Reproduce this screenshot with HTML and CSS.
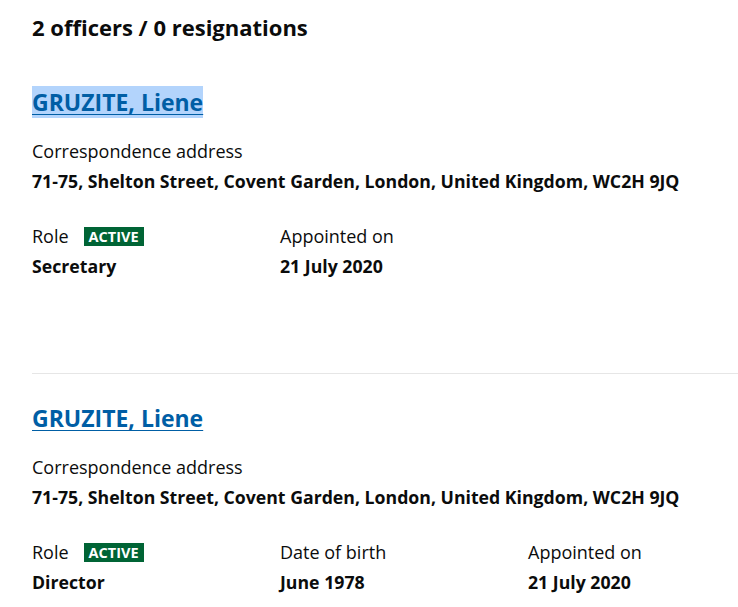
FILE: index.html
```html
<!DOCTYPE html>
<html lang="en">
<head>
<meta charset="utf-8">
<title>Officers</title>
<link rel="stylesheet" href="styles.css">
</head>
<body>
<main class="page">
  <h2 class="count">2 officers / 0 resignations</h2>
  <div class="officers">
    <section class="officer">
      <h3 class="name"><a href="#" class="selected">GRUZITE, Liene</a></h3>
      <dl class="field">
        <dt>Correspondence address</dt>
        <dd>71-75, Shelton Street, Covent Garden, London, United Kingdom, WC2H 9JQ</dd>
      </dl>
      <div class="cols">
        <dl class="field">
          <dt>Role <span class="badge">ACTIVE</span></dt>
          <dd>Secretary</dd>
        </dl>
        <dl class="field">
          <dt>Appointed on</dt>
          <dd>21 July 2020</dd>
        </dl>
      </div>
    </section>
    <section class="officer">
      <h3 class="name"><a href="#">GRUZITE, Liene</a></h3>
      <dl class="field">
        <dt>Correspondence address</dt>
        <dd>71-75, Shelton Street, Covent Garden, London, United Kingdom, WC2H 9JQ</dd>
      </dl>
      <div class="cols">
        <dl class="field">
          <dt>Role <span class="badge">ACTIVE</span></dt>
          <dd>Director</dd>
        </dl>
        <dl class="field">
          <dt>Date of birth</dt>
          <dd>June 1978</dd>
        </dl>
        <dl class="field">
          <dt>Appointed on</dt>
          <dd>21 July 2020</dd>
        </dl>
      </div>
    </section>
  </div>
</main>
</body>
</html>
```
FILE: styles.css
```css
html, body {
  margin: 0;
  padding: 0;
  background: #ffffff;
}
body {
  font-family: "Open Sans", "Liberation Sans", sans-serif;
  color: #0b0c0c;
  overflow: hidden;
}
.page {
  padding: 12px 0 0 32px;
  width: 706px;
}
.count {
  margin: 0;
  font-size: 22px;
  line-height: 30px;
  font-weight: 700;
}
.officers {
  margin-top: 45px;
}
.officer {
  padding-bottom: 92px;
}
.officer + .officer {
  border-top: 1px solid #e6e6e6;
  padding-top: 29px;
  padding-bottom: 0;
}
.name {
  margin: 0;
  font-size: 23px;
  line-height: 30px;
  font-weight: 700;
}
.name a {
  color: #005ea5;
  text-decoration: underline;
  text-underline-offset: 3px;
  text-decoration-thickness: 1px;
}
.name a.selected {
  background: #b3d4fc;
}
.field {
  margin: 0;
}
.name + .field {
  margin-top: 19px;
}
.field dt {
  font-size: 18px;
  line-height: 30px;
  display: flex;
  align-items: center;
  gap: 15px;
}
.field dd {
  margin: 0;
  font-size: 17.7px;
  line-height: 30px;
  font-weight: 700;
}
.cols {
  margin-top: 25px;
  display: grid;
  grid-template-columns: 248px 248px 1fr;
}
.badge {
  display: inline-block;
  background: #006435;
  color: #ffffff;
  font-size: 14.5px;
  font-weight: 700;
  line-height: 19px;
  padding: 0 5px;
}
```
